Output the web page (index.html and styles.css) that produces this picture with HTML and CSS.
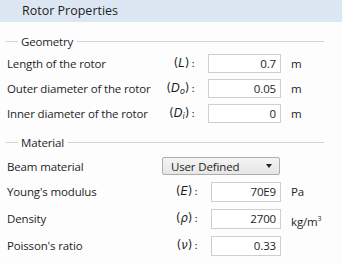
FILE: index.html
```html
<!DOCTYPE html>
<html lang="en">
<head>
  <meta charset="UTF-8">
  <title>Rotor Properties</title>
  <link rel="stylesheet" href="styles.css">
</head>
<body>
  <div class="panel">
    <div class="header">Rotor Properties</div>

    <div class="section-title first"><span>Geometry</span></div>
    <div class="row geo">
      <span class="label">Length of the rotor</span>
      <span class="sym">(<i>L</i>)<b>:</b></span>
      <span class="field">0.7</span>
      <span class="unit">m</span>
    </div>
    <div class="row geo">
      <span class="label">Outer diameter of the rotor</span>
      <span class="sym">(<i>D<sub>o</sub></i>)<b>:</b></span>
      <span class="field">0.05</span>
      <span class="unit">m</span>
    </div>
    <div class="row geo">
      <span class="label">Inner diameter of the rotor</span>
      <span class="sym">(<i>D<sub>i</sub></i>)<b>:</b></span>
      <span class="field">0</span>
      <span class="unit">m</span>
    </div>

    <div class="section-title"><span>Material</span></div>
    <div class="row select-row">
      <span class="label">Beam material</span>
      <div class="select">
        <span>User Defined</span>
        <span class="arrow"></span>
      </div>
    </div>
    <div class="row mat">
      <span class="label">Young's modulus</span>
      <span class="sym">(<i>E</i>)<b>:</b></span>
      <span class="field">70E9</span>
      <span class="unit">Pa</span>
    </div>
    <div class="row mat">
      <span class="label">Density</span>
      <span class="sym">(<i>ρ</i>)<b>:</b></span>
      <span class="field">2700</span>
      <span class="unit">kg/m<sup>3</sup></span>
    </div>
    <div class="row mat">
      <span class="label">Poisson's ratio</span>
      <span class="sym">(<i>ν</i>)<b>:</b></span>
      <span class="field">0.33</span>
      <span class="unit"></span>
    </div>
  </div>
</body>
</html>
```

FILE: styles.css
```css
body {
  margin: 0;
  background: #fdfdfe;
  font-family: "Open Sans", sans-serif;
  font-size: 11.5px;
  letter-spacing: -0.15px;
  color: #1e1e1e;
}

.panel {
  width: 342px;
}

.header {
  height: 22px;
  line-height: 22px;
  padding-left: 22px;
  background: #dde7f3;
  font-size: 12.5px;
  letter-spacing: 0;
}

.section-title {
  display: flex;
  align-items: center;
  height: 16px;
  margin: 5px 18px 5px 6px;
}

.section-title.first {
  margin-top: 11px;
}

.section-title::before {
  content: "";
  width: 12px;
  border-top: 1px solid #d4d4d4;
}

.section-title::after {
  content: "";
  flex: 1;
  border-top: 1px solid #d4d4d4;
}

.section-title span {
  padding: 0 4px 0 3px;
}

.row {
  display: flex;
  align-items: flex-start;
  padding-left: 7px;
}

.row.geo {
  height: 25px;
}

.row.mat {
  height: 27px;
}

.row.select-row {
  height: 25px;
  padding-top: 2px;
}

.label {
  flex: 1;
  line-height: 19px;
  white-space: nowrap;
}

.select-row .label {
  flex: none;
  width: 155px;
}

.sym {
  line-height: 19px;
  font-family: "DejaVu Sans", sans-serif;
  font-size: 11.5px;
  letter-spacing: 0;
  white-space: nowrap;
}

.sym b {
  font-weight: normal;
  font-size: 11px;
  margin-left: 2px;
}

.sym sub {
  font-size: 8px;
  vertical-align: -2px;
}

.field {
  box-sizing: border-box;
  height: 19px;
  line-height: 17px;
  margin-left: 13px;
  padding-right: 4px;
  border: 1px solid #cfcfcf;
  background: #fff;
  text-align: right;
}

.geo .field {
  width: 73px;
}

.mat .field {
  width: 70px;
  height: 20px;
  line-height: 18px;
}

.unit {
  width: 51px;
  margin-left: 10px;
  line-height: 19px;
}

.mat .unit {
  line-height: 20px;
}

.unit sup {
  font-size: 7px;
}

.select {
  box-sizing: border-box;
  display: flex;
  align-items: center;
  justify-content: space-between;
  width: 118px;
  height: 18px;
  padding: 0 7px 0 8px;
  border: 1px solid #adadad;
  border-radius: 2px;
  background: linear-gradient(#f4f4f4, #e6e6e6);
}

.arrow {
  width: 0;
  height: 0;
  border-left: 3.5px solid transparent;
  border-right: 3.5px solid transparent;
  border-top: 4px solid #222;
}
```
